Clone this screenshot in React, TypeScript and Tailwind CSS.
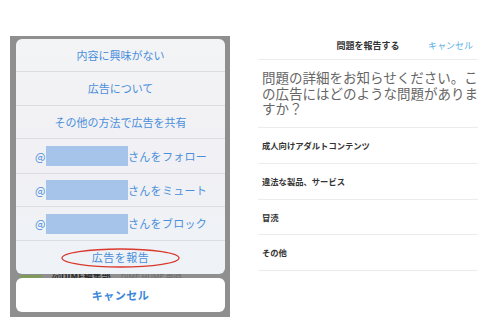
import React from "react";

const font = { fontFamily: '"Noto Sans CJK JP", "Noto Sans", sans-serif' };

function Row({ h, children, last }: { h: string; children: React.ReactNode; last?: boolean }) {
  return (
    <div className={`${h} flex items-center justify-center ${last ? "" : "border-b border-[#dcdde0]"}`}>
      {children}
    </div>
  );
}

function UserRow({ h, label }: { h: string; label: string }) {
  return (
    <div className={`${h} flex items-center border-b border-[#dcdde0] pl-[19px]`}>
      <span className="text-[11px] text-[#4a8fdc] w-[11px]">@</span>
      <span className="w-[82px] h-[20px] bg-[#a6c3ea]" />
      <span className="text-[11px] text-[#4a8fdc] tracking-[0.3px]">{label}</span>
    </div>
  );
}

export default function App() {
  return (
    <div className="w-[490px] h-[328px] bg-white flex" style={font}>
      {/* Left */}
      <div className="w-[245px] pt-[36px] pl-[10px]">
        <div className="w-[220px] h-[281px] bg-[#8f8f8f] pt-[3px] pl-[6px] pr-[5px] flex flex-col">
          <div className="rounded-[6px] bg-gradient-to-b from-[#f3f4f6] via-[#f1f0f4] to-[#eef3f7] flex flex-col overflow-hidden">
            <Row h="h-[33px]"><span className="text-[11px] text-[#4a8fdc]">内容に興味がない</span></Row>
            <Row h="h-[34px]"><span className="text-[11px] text-[#4a8fdc]">広告について</span></Row>
            <Row h="h-[33px]"><span className="text-[11px] text-[#4a8fdc]">その他の方法で広告を共有</span></Row>
            <UserRow h="h-[35px]" label="さんをフォロー" />
            <UserRow h="h-[33px]" label="さんをミュート" />
            <UserRow h="h-[34px]" label="さんをブロック" />
            <Row h="h-[33px]" last>
              <div className="relative w-[119px] h-[20px] flex items-center justify-center">
                <span className="text-[11px] text-[#4a8fdc] tracking-[0.5px]">広告を報告</span>
                <svg className="absolute inset-0" width="119" height="20" viewBox="0 0 119 20">
                  <ellipse cx="59.5" cy="10" rx="58.5" ry="9" fill="none" stroke="#d9382c" strokeWidth="1.3" />
                </svg>
              </div>
            </Row>
          </div>
          <div className="h-[4px] overflow-hidden flex items-end relative">
            <div className="flex items-center gap-[10px] translate-y-[4px]">
              <span className="ml-[4px] w-[22px] h-[5px] bg-[#7f9a5a]" />
              <span className="text-[9px] leading-[10px] font-bold text-[#2b2b2b]">@DIME編集部</span>
              <span className="text-[8px] leading-[10px] text-[#6d6d6d]">DIME HUMF 毎時</span>
            </div>
          </div>
          <div className="h-[34px] rounded-[6px] bg-white flex items-center justify-center">
            <span className="text-[11px] font-bold text-[#3a86d8] tracking-[0.5px]">キャンセル</span>
          </div>
        </div>
      </div>
      {/* Right */}
      <div className="w-[245px] pl-[13px] pr-[12px] pt-[39px]">
        <div className="h-[21px] border-b border-[#ececec] relative flex items-start justify-center">
          <span className="text-[9px] leading-[14px] font-bold text-[#333]">問題を報告する</span>
          <span className="absolute right-[5px] top-0 text-[9px] leading-[14px] text-[#5bb0e6]">キャンセル</span>
        </div>
        <div className="h-[68px] border-b border-[#ececec] pt-[10px] pl-[4px]">
          <p className="text-[13.5px] leading-[15.5px] text-[#666] whitespace-nowrap">
            問題の詳細をお知らせください。こ
            <br />
            の広告にはどのような問題がありま
            <br />
            すか？
          </p>
        </div>
        {["成人向けアダルトコンテンツ", "違法な製品、サービス", "冒涜", "その他"].map((t, i) => (
          <div
            key={t}
            className={`${i === 0 ? "h-[36px]" : "h-[35.5px]"} border-b border-[#ececec] flex items-center pl-[4px]`}
          >
            <span className="text-[8.3px] font-bold text-[#333]">{t}</span>
          </div>
        ))}
      </div>
    </div>
  );
}
